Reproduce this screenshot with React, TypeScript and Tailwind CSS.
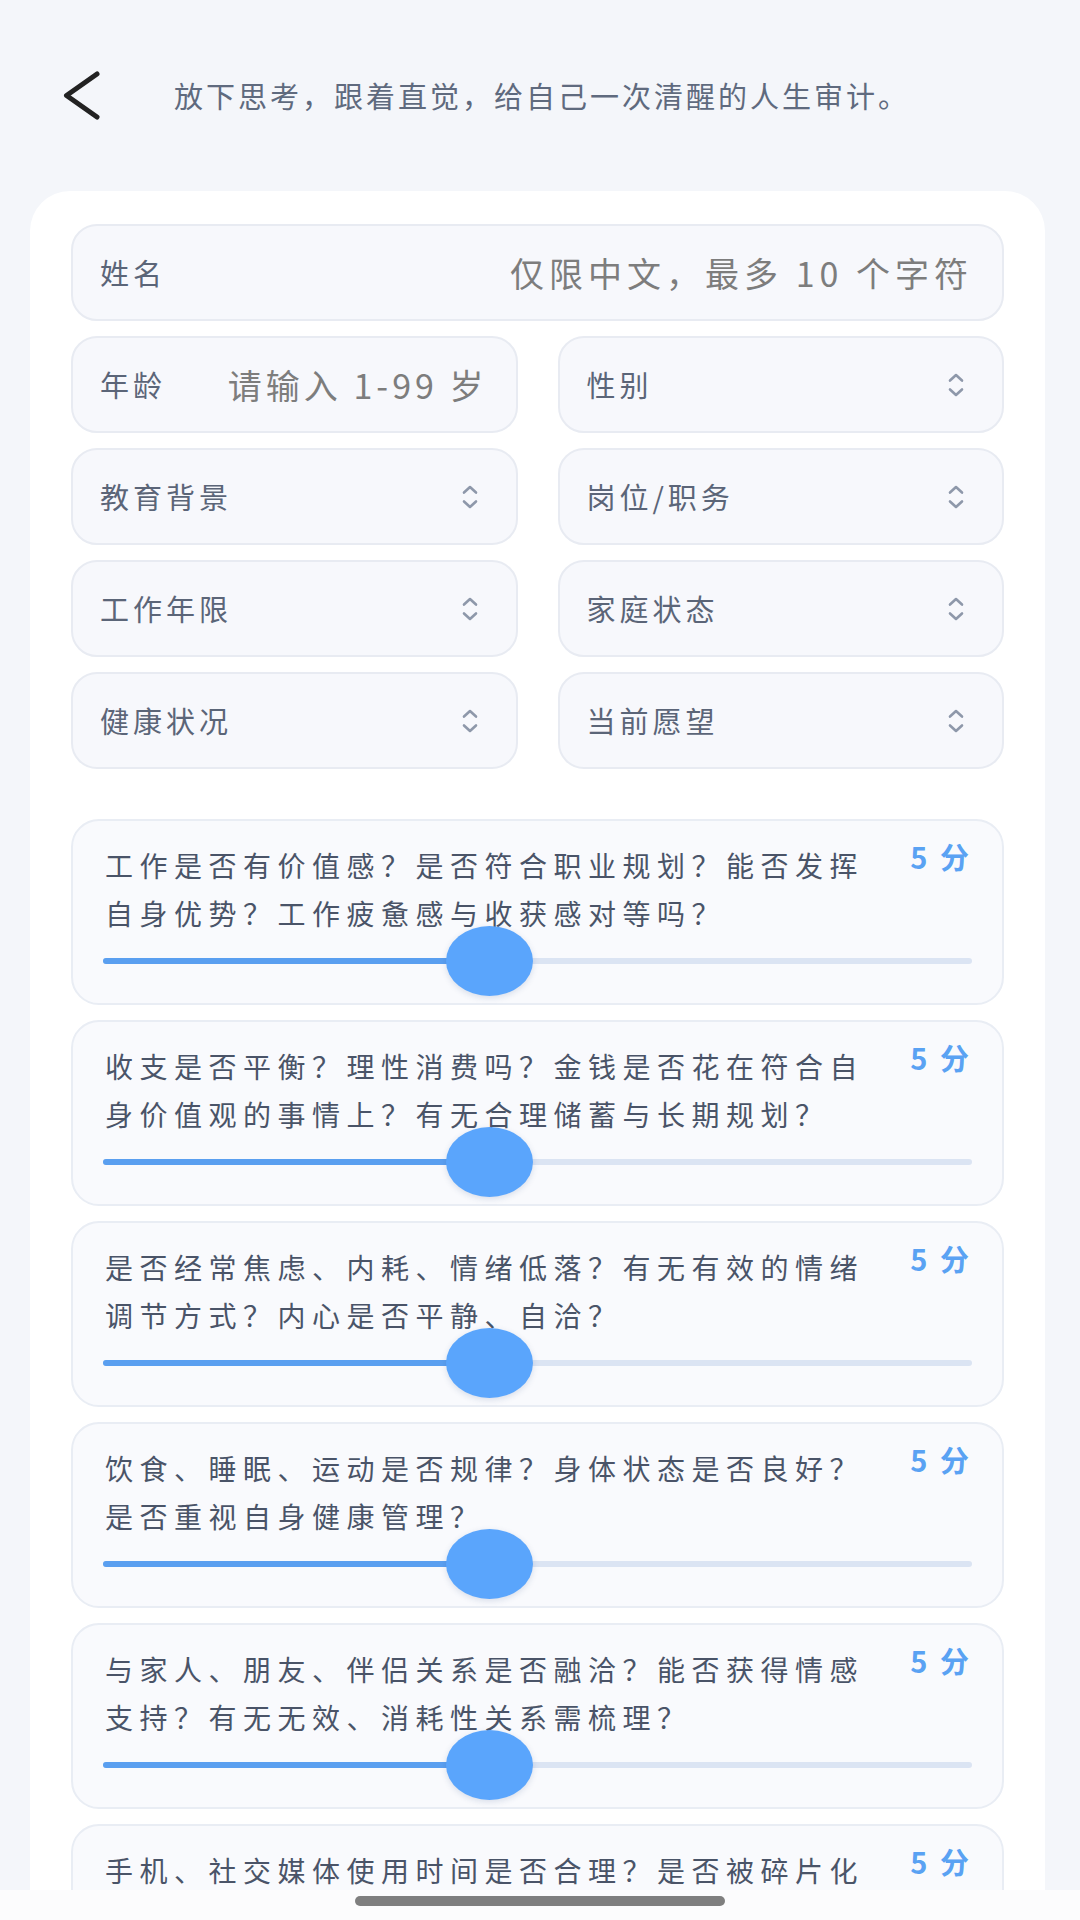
import { useState } from "react"

const selectRows: [string, string][] = [
  ["教育背景", "岗位/职务"],
  ["工作年限", "家庭状态"],
  ["健康状况", "当前愿望"],
]

const questions = [
  "工作是否有价值感？是否符合职业规划？能否发挥自身优势？工作疲惫感与收获感对等吗？",
  "收支是否平衡？理性消费吗？金钱是否花在符合自身价值观的事情上？有无合理储蓄与长期规划？",
  "是否经常焦虑、内耗、情绪低落？有无有效的情绪调节方式？内心是否平静、自洽？",
  "饮食、睡眠、运动是否规律？身体状态是否良好？是否重视自身健康管理？",
  "与家人、朋友、伴侣关系是否融洽？能否获得情感支持？有无无效、消耗性关系需梳理？",
  "手机、社交媒体使用时间是否合理？是否被碎片化信息裹挟？",
]

function UpDown() {
  return (
    <svg width="16" height="24" viewBox="0 0 16 24" fill="none" stroke="#8e98aa" strokeWidth="2.6" strokeLinecap="round" strokeLinejoin="round">
      <path d="M2 7.5 L8 2 L14 7.5" />
      <path d="M2 16.5 L8 22 L14 16.5" />
    </svg>
  )
}

function SelectField({ label }: { label: string }) {
  return (
    <div className="flex h-[97px] items-center justify-between rounded-[26px] border-2 border-[#e8ebf2] bg-[#f7f8fc] pl-[27px] pr-[38px]">
      <span className="text-[29px] tracking-[4px] text-[#5b6578]">{label}</span>
      <UpDown />
    </div>
  )
}

function QuestionCard({ text }: { text: string }) {
  const [score] = useState(5)
  return (
    <div className="h-[186px] shrink-0 rounded-[28px] border-2 border-[#e9edf4] bg-[#f9fafd] px-[30px] pt-[20px]">
      <div className="flex items-start justify-between">
        <p className="w-[770px] pl-[2px] text-[28px] leading-[48px] tracking-[6.5px] text-[#4a5468]">{text}</p>
        <span className="mt-[1px] text-[29px] font-bold leading-[29px] tracking-[3px] text-[#5aa2f3]">{score} 分</span>
      </div>
      <div className="relative mt-[21px] h-[6px] rounded-full bg-[#dbe4f3]">
        <div className="h-full w-[386px] rounded-full bg-[#5a9ff0]" />
        <div className="absolute left-[343px] top-1/2 h-[70px] w-[87px] -translate-y-1/2 rounded-[50%] bg-[#5aa5fc] shadow-[0_2px_6px_rgba(30,60,120,0.15)]" />
      </div>
    </div>
  )
}

export default function App() {
  return (
    <div className="flex h-[1920px] w-[1080px] flex-col overflow-hidden font-['Noto_Sans_CJK_SC','Noto_Sans',sans-serif]">
      <div className="flex-1 overflow-hidden bg-[#f4f6fa]">
        {/* header */}
        <div className="flex items-center pl-[60px] pt-[69px]">
          <svg width="44" height="54" viewBox="0 0 44 54" fill="none" stroke="#222222" strokeWidth="5" strokeLinecap="round" strokeLinejoin="round">
            <path d="M37 5 L6.5 26.5 L37 48" />
          </svg>
          <p className="ml-[70px] text-[29px] tracking-[3px] text-[#5f6a7e]">放下思考，跟着直觉，给自己一次清醒的人生审计。</p>
        </div>

        {/* form card */}
        <div className="ml-[30px] mt-[68px] w-[1015px] rounded-t-[40px] bg-white px-[41px] pt-[33px] pb-[40px]">
          <div className="flex flex-col gap-[15px]">
            <div className="flex h-[97px] items-center justify-between rounded-[26px] border-2 border-[#e8ebf2] bg-[#f7f8fc] pl-[27px] pr-[29px]">
              <span className="shrink-0 text-[29px] tracking-[4px] text-[#5b6578]">姓名</span>
              <input
                className="min-w-0 flex-1 bg-transparent text-right text-[34px] tracking-[5px] text-[#4a5468] outline-none placeholder:text-[#7d7d7d]"
                placeholder="仅限中文，最多 10 个字符"
              />
            </div>

            <div className="grid grid-cols-2 gap-x-[40px] gap-y-[15px]">
              <div className="flex h-[97px] items-center justify-between rounded-[26px] border-2 border-[#e8ebf2] bg-[#f7f8fc] pl-[27px] pr-[28px]">
                <span className="shrink-0 text-[29px] tracking-[4px] text-[#5b6578]">年龄</span>
                <input
                  className="min-w-0 flex-1 bg-transparent text-right text-[34px] tracking-[4px] text-[#4a5468] outline-none placeholder:text-[#7d7d7d]"
                  placeholder="请输入 1-99 岁"
                />
              </div>
              <SelectField label="性别" />
              {selectRows.map(([a, b]) => (
                <>
                  <SelectField key={a} label={a} />
                  <SelectField key={b} label={b} />
                </>
              ))}
            </div>
          </div>

          <div className="mt-[50px] flex flex-col gap-[15px]">
            {questions.map((q) => (
              <QuestionCard key={q} text={q} />
            ))}
          </div>
        </div>
      </div>

      {/* home indicator */}
      <div className="flex h-[30px] shrink-0 justify-center bg-[#fcfcfd] pt-[6px]">
        <div className="h-[10px] w-[370px] rounded-full bg-[#7f7f7f]" />
      </div>
    </div>
  )
}
